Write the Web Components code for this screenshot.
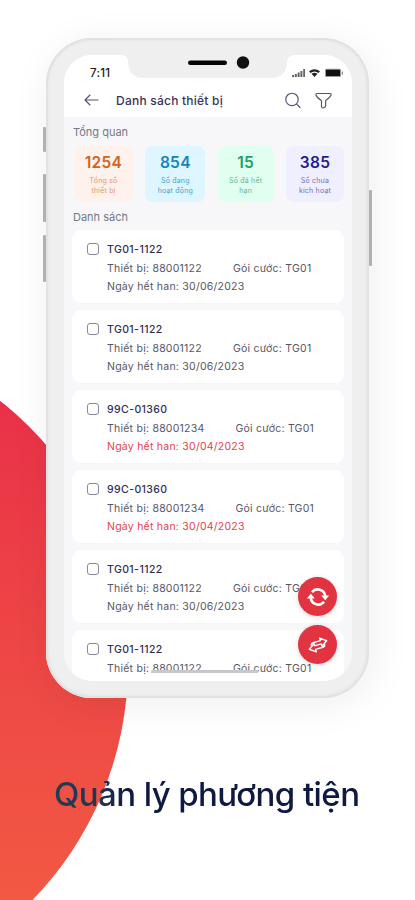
<!DOCTYPE html>
<html lang="vi">
<head>
<meta charset="utf-8">
<title>Quản lý phương tiện</title>
<style>
    body {
        margin: 0;
        font-family: Inter, "Liberation Sans", sans-serif;
        background: #fff;
    }
</style>
</head>
<body>
<promo-page>
    <phone-frame>
        <app-header slot="header">Danh sách thiết bị</app-header>
        <section-label>Tổng quan</section-label>
        <stat-row>
            <stat-tile value="1254" style="--w:59px;--fg:#cf6420;--sub:#e8926c;--bg:#fff1ec">Tổng số<br>thiết bị</stat-tile>
            <stat-tile value="854" style="--w:60px;--fg:#1683b8;--sub:#45a5d0;--bg:#def6ff">Số đang<br>hoạt động</stat-tile>
            <stat-tile value="15" style="--w:56px;--fg:#1fa065;--sub:#5cba91;--bg:#e0fff1">Số đã hết<br>hạn</stat-tile>
            <stat-tile value="385" style="--w:58px;--fg:#241b8c;--sub:#7770b5;--bg:#f0efff">Số chưa<br>kích hoạt</stat-tile>
        </stat-row>
        <section-label>Danh sách</section-label>
        <device-card name="TG01-1122" device="88001122" date="30/06/2023"></device-card>
        <device-card name="TG01-1122" device="88001122" date="30/06/2023"></device-card>
        <device-card name="99C-01360" device="88001234" date="30/04/2023" expired></device-card>
        <device-card name="99C-01360" device="88001234" date="30/04/2023" expired></device-card>
        <device-card name="TG01-1122" device="88001122" date="30/06/2023"></device-card>
        <device-card name="TG01-1122" device="88001122"></device-card>
        <fab-button slot="fab" icon="refresh"></fab-button>
        <fab-button slot="fab" icon="swap"></fab-button>
    </phone-frame>
    <span slot="caption">Quản lý phương tiện</span>
</promo-page>

<script>
class PromoPage extends HTMLElement {
    connectedCallback() {
        const shadow = this.attachShadow({ mode: "open" });
        shadow.innerHTML = `
            <style>
                :host {
                    display: flex;
                    flex-direction: column;
                    position: relative;
                    box-sizing: border-box;
                    width: 415px;
                    height: 900px;
                    padding: 38px 46px 0;
                    overflow: hidden;
                }
                .circle {
                    position: absolute;
                    left: -546px;
                    top: 327.5px;
                    width: 674px;
                    height: 674px;
                    border-radius: 50%;
                    background: linear-gradient(#e9284a 0%, #ea3747 20%, #ef4b45 57%, #f25a42 88%);
                }
                .caption {
                    position: relative;
                    margin: 75px 0 0 8px;
                    width: max-content;
                    font-size: 33px;
                    line-height: 42px;
                    font-weight: 550;
                    letter-spacing: -.58px;
                    background: linear-gradient(90deg, #243b53 0, #223550 45px, #0f1a42 75px);
                    -webkit-background-clip: text;
                    background-clip: text;
                    color: transparent;
                }
            </style>
            <div class="circle"></div>
            <slot></slot>
            <div class="caption"><slot name="caption"></slot></div>
        `;
    }
}
customElements.define("promo-page", PromoPage);

class PhoneFrame extends HTMLElement {
    connectedCallback() {
        const shadow = this.attachShadow({ mode: "open" });
        shadow.innerHTML = `
            <style>
                :host {
                    display: block;
                    position: relative;
                    box-sizing: border-box;
                    width: 323px;
                    height: 660px;
                    padding: 17px 17px 17px 18px;
                    border-radius: 46px;
                    background: #efefef;
                    box-shadow: inset 0 0 0 2px #e2e2e2, inset 0 0 0 4px #ebebeb, 4px 6px 40px rgba(0, 0, 0, .07);
                }
                .screen {
                    position: relative;
                    display: flex;
                    flex-direction: column;
                    height: 626px;
                    border-radius: 28px;
                    overflow: hidden;
                    background: #f7f7fa;
                }
                .list {
                    display: flex;
                    flex-direction: column;
                    padding: 0 8px;
                }
                .notch {
                    position: absolute;
                    left: 58px;
                    top: 0;
                }
                .btn {
                    position: absolute;
                    width: 3px;
                    background: #b0b0b3;
                    border-radius: 1px;
                }
                .home {
                    position: absolute;
                    left: 87px;
                    top: 615px;
                    width: 107px;
                    height: 8px;
                    background: #fff;
                    border-top: 3px solid #c8c8cc;
                    border-radius: 2px;
                }
                .fabs {
                    position: absolute;
                    right: 15px;
                    bottom: 17px;
                    display: flex;
                    flex-direction: column;
                    gap: 9px;
                }
            </style>
            <i class="btn" style="left:-3px;top:89px;height:25px"></i>
            <i class="btn" style="left:-3px;top:136px;height:48px"></i>
            <i class="btn" style="left:-3px;top:197px;height:47px"></i>
            <i class="btn" style="right:-3px;top:152px;height:76px"></i>
            <div class="screen">
                <slot name="header"></slot>
                <div class="list"><slot></slot></div>
                <svg class="notch" width="172" height="24" viewBox="0 0 172 24">
                    <path fill="#efefef" d="M0 0H172Q165 1 165 7C165 17 159 23 150 23H22C12 23 6 17 6 7Q6 1 0 0Z"/>
                    <rect x="66" y="5.5" width="39" height="4.6" rx="2.3" fill="#050505"/>
                    <circle cx="121" cy="7.5" r="6.2" fill="#111"/>
                </svg>
                <div class="home"></div>
                <div class="fabs"><slot name="fab"></slot></div>
            </div>
        `;
    }
}
customElements.define("phone-frame", PhoneFrame);

class AppHeader extends HTMLElement {
    connectedCallback() {
        const shadow = this.attachShadow({ mode: "open" });
        shadow.innerHTML = `
            <style>
                :host {
                    display: block;
                    flex: none;
                    height: 62px;
                    background: #fff;
                }
                .status {
                    display: flex;
                    justify-content: space-between;
                    align-items: center;
                    height: 14px;
                    padding: 11px 8px 0 26px;
                    font-size: 11.5px;
                    font-weight: 500;
                    letter-spacing: .3px;
                    color: #222;
                }
                .bar {
                    display: flex;
                    align-items: center;
                    height: 18px;
                    margin-top: 11px;
                    padding: 0 20px 0 20px;
                }
                .title {
                    flex: 1;
                    margin-left: 17px;
                    font-size: 12px;
                    font-weight: 500;
                    letter-spacing: .23px;
                    color: #35345c;
                }
                svg {
                    display: block;
                    fill: none;
                    stroke: #55546f;
                    stroke-width: 1.15;
                    stroke-linecap: round;
                    stroke-linejoin: round;
                }
            </style>
            <div class="status">
                <span>7:11</span>
                <svg width="52" height="10" viewBox="0 0 52 10" style="stroke:none;fill:#222">
                    <path fill="#666" d="M0 7h2v2H0zM2.8 6h2v3h-2zM5.6 4.6h2V9h-2zM8.4 3h2v6h-2zM11.2 1h1.8v8h-1.8z"/>
                    <path d="M17 3.3Q22.5-1 28 3.3L26.5 5Q22.5 2 18.5 5ZM19.5 5.7Q22.5 3.6 25.5 5.7L22.5 9Z"/>
                    <rect x="33" y=".8" width="16" height="8.2" rx="1.5" fill="#999"/>
                    <rect x="34" y="1.8" width="14" height="6.2" rx=".6" fill="#111"/>
                    <rect x="49.7" y="3.5" width="1.3" height="3" fill="#888"/>
                </svg>
            </div>
            <div class="bar">
                <svg width="15" height="12" viewBox="0 0 15 12"><path d="M14 6H1M6 1L1 6l5 5"/></svg>
                <div class="title"><slot></slot></div>
                <svg width="17" height="17" viewBox="0 0 17 17"><circle cx="7" cy="7.4" r="6.2"/><path d="M11.7 12.1l3.3 3.4"/></svg>
                <svg width="17" height="17" viewBox="0 0 17 17" style="margin-left:13px"><path d="M2 1.5H15Q16.5 1.6 16 3Q15 6 10.7 8.6V13.5Q10.5 15.5 7.8 16Q6.6 16 6.5 14.7V8.6Q2 6 1 3Q.7 1.7 2 1.5Z"/></svg>
            </div>
        `;
    }
}
customElements.define("app-header", AppHeader);

class SectionLabel extends HTMLElement {
    connectedCallback() {
        const shadow = this.attachShadow({ mode: "open" });
        shadow.innerHTML = `
            <style>
                :host {
                    display: block;
                    height: 28px;
                    line-height: 30px;
                    padding-left: 1px;
                    font-size: 11px;
                    color: #777786;
                }
            </style>
            <slot></slot>
        `;
    }
}
customElements.define("section-label", SectionLabel);

class StatRow extends HTMLElement {
    connectedCallback() {
        const shadow = this.attachShadow({ mode: "open" });
        shadow.innerHTML = `
            <style>
                :host {
                    display: flex;
                    justify-content: space-between;
                    padding: 1px 0 0 2px;
                }
            </style>
            <slot></slot>
        `;
    }
}
customElements.define("stat-row", StatRow);

class StatTile extends HTMLElement {
    connectedCallback() {
        const shadow = this.attachShadow({ mode: "open" });
        shadow.innerHTML = `
            <style>
                :host {
                    display: block;
                    box-sizing: border-box;
                    width: var(--w);
                    height: 56px;
                    padding-top: 7px;
                    border-radius: 7px;
                    text-align: center;
                    background: var(--bg);
                }
                .value {
                    font-size: 15.5px;
                    line-height: 19px;
                    font-weight: 600;
                    letter-spacing: .3px;
                    color: var(--fg);
                }
                .label {
                    margin-top: 4px;
                    font-size: 7px;
                    line-height: 9.5px;
                    letter-spacing: .2px;
                    white-space: nowrap;
                    color: var(--sub);
                }
            </style>
            <div class="value">${this.getAttribute("value")}</div>
            <div class="label"><slot></slot></div>
        `;
    }
}
customElements.define("stat-tile", StatTile);

class DeviceCard extends HTMLElement {
    connectedCallback() {
        const date = this.getAttribute("date");
        const shadow = this.attachShadow({ mode: "open" });
        shadow.innerHTML = `
            <style>
                :host {
                    display: flex;
                    box-sizing: border-box;
                    height: 73px;
                    margin-bottom: 7px;
                    padding: 11px 0 0 15px;
                    border-radius: 9px;
                    background: #fff;
                    font-size: 10.5px;
                    line-height: 18px;
                    letter-spacing: .24px;
                    color: #565665;
                }
                .check {
                    box-sizing: border-box;
                    width: 12px;
                    height: 12px;
                    margin: 2px 8px 0 0;
                    border: 1.2px solid #8785a0;
                    border-radius: 3px;
                }
                .name {
                    font-weight: 500;
                    letter-spacing: .4px;
                    color: #2f2e54;
                }
                .row {
                    display: flex;
                    gap: 31px;
                    white-space: nowrap;
                }
                .name + .row { margin-top: 1px; }
                :host([expired]) .date { color: #e2434c; }
            </style>
            <div class="check"></div>
            <div>
                <div class="name">${this.getAttribute("name")}</div>
                <div class="row">
                    <span>Thiết bị: ${this.getAttribute("device")}</span>
                    <span>Gói cước: TG01</span>
                </div>
                ${date ? `<div class="date">Ngày hết han: ${date}</div>` : ""}
            </div>
        `;
    }
}
customElements.define("device-card", DeviceCard);

const fabIcons = {
    refresh: `
        <path stroke-width="2.5" d="M6 6.3A7.4 7.4 0 0 1 19.2 10M18 15.7A7.4 7.4 0 0 1 4.8 12"/>
        <path fill="#fff" stroke="none" d="M15.2 9.500h8l-4 4.800zM.8 12.500h8l-4-4.800z"/>`,
    swap: `
        <g transform="rotate(-16 12 11)" stroke-width="1.4">
            <path d="M5.500 10Q5.500 7.500 8 7.500H15.500V4.800L21.500 9.300L15.500 13.300V10.800H9M18.500 12Q18.500 14.500 16 14.500H8.500V17.200L2.500 12.700L8.500 8.700V11.200"/>
        </g>`
};

class FabButton extends HTMLElement {
    connectedCallback() {
        const shadow = this.attachShadow({ mode: "open" });
        shadow.innerHTML = `
            <style>
                :host {
                    display: flex;
                    align-items: center;
                    justify-content: center;
                    width: 39px;
                    height: 39px;
                    border-radius: 50%;
                    background: #e13340;
                    box-shadow: 0 1px 5px rgba(80, 30, 60, .18);
                }
                svg {
                    fill: none;
                    stroke: #fff;
                    stroke-linejoin: round;
                }
            </style>
            <svg width="24" height="22" viewBox="0 0 24 22">${fabIcons[this.getAttribute("icon")]}</svg>
        `;
    }
}
customElements.define("fab-button", FabButton);
</script>
</body>
</html>
